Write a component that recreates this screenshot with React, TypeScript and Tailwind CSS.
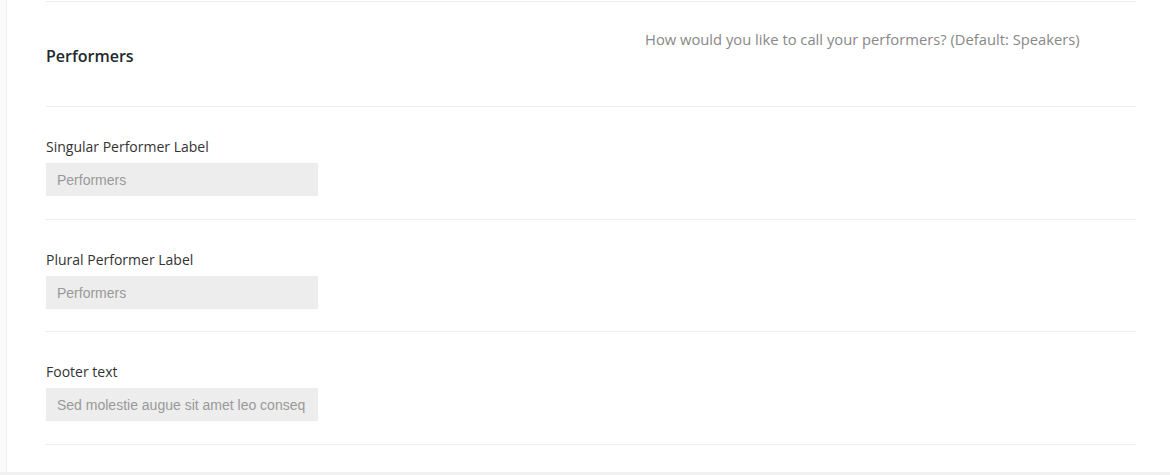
const fields = [
  { label: "Singular Performer Label", value: "Performers", h: "h-[82px]" },
  { label: "Plural Performer Label", value: "Performers", h: "h-[81px]" },
  { label: "Footer text", value: "Sed molestie augue sit amet leo consequat posuere.", h: "h-[82px]" },
];

export default function App() {
  return (
    <div className="h-[475px] w-[1170px] overflow-hidden bg-[#f1f1f1] font-['Open_Sans',sans-serif]">
      <div className="h-[472px] bg-[#fbfbfb] pl-[6px]">
        <div className="h-full border-l border-[#efefef] bg-white pt-px pl-[39px] pr-[34px]">
          <div className="box-content grid h-[104px] grid-cols-[599px_1fr] border-y border-[#ededed]">
            <h2 className="mt-[42px] text-[16px] leading-[24px] font-semibold text-[#23282d]">
              Performers
            </h2>
            <p className="mt-[26px] text-[14.75px] leading-[22px] text-[#888]">
              How would you like to call your performers? (Default: Speakers)
            </p>
          </div>
          {fields.map((f) => (
            <div key={f.label} className={`box-content ${f.h} border-b border-[#ededed] pt-[30px]`}>
              <label className="block text-[14px] leading-[20px] text-[#333]">{f.label}</label>
              <input
                readOnly
                value={f.value}
                className="mt-[6px] h-[33px] w-[272px] border border-[#ececec] bg-[#ededed] pr-[12px] pl-[10px] font-['Liberation_Sans',Arial,sans-serif] text-[14px] text-[#999] outline-none"
              />
            </div>
          ))}
        </div>
      </div>
    </div>
  );
}
